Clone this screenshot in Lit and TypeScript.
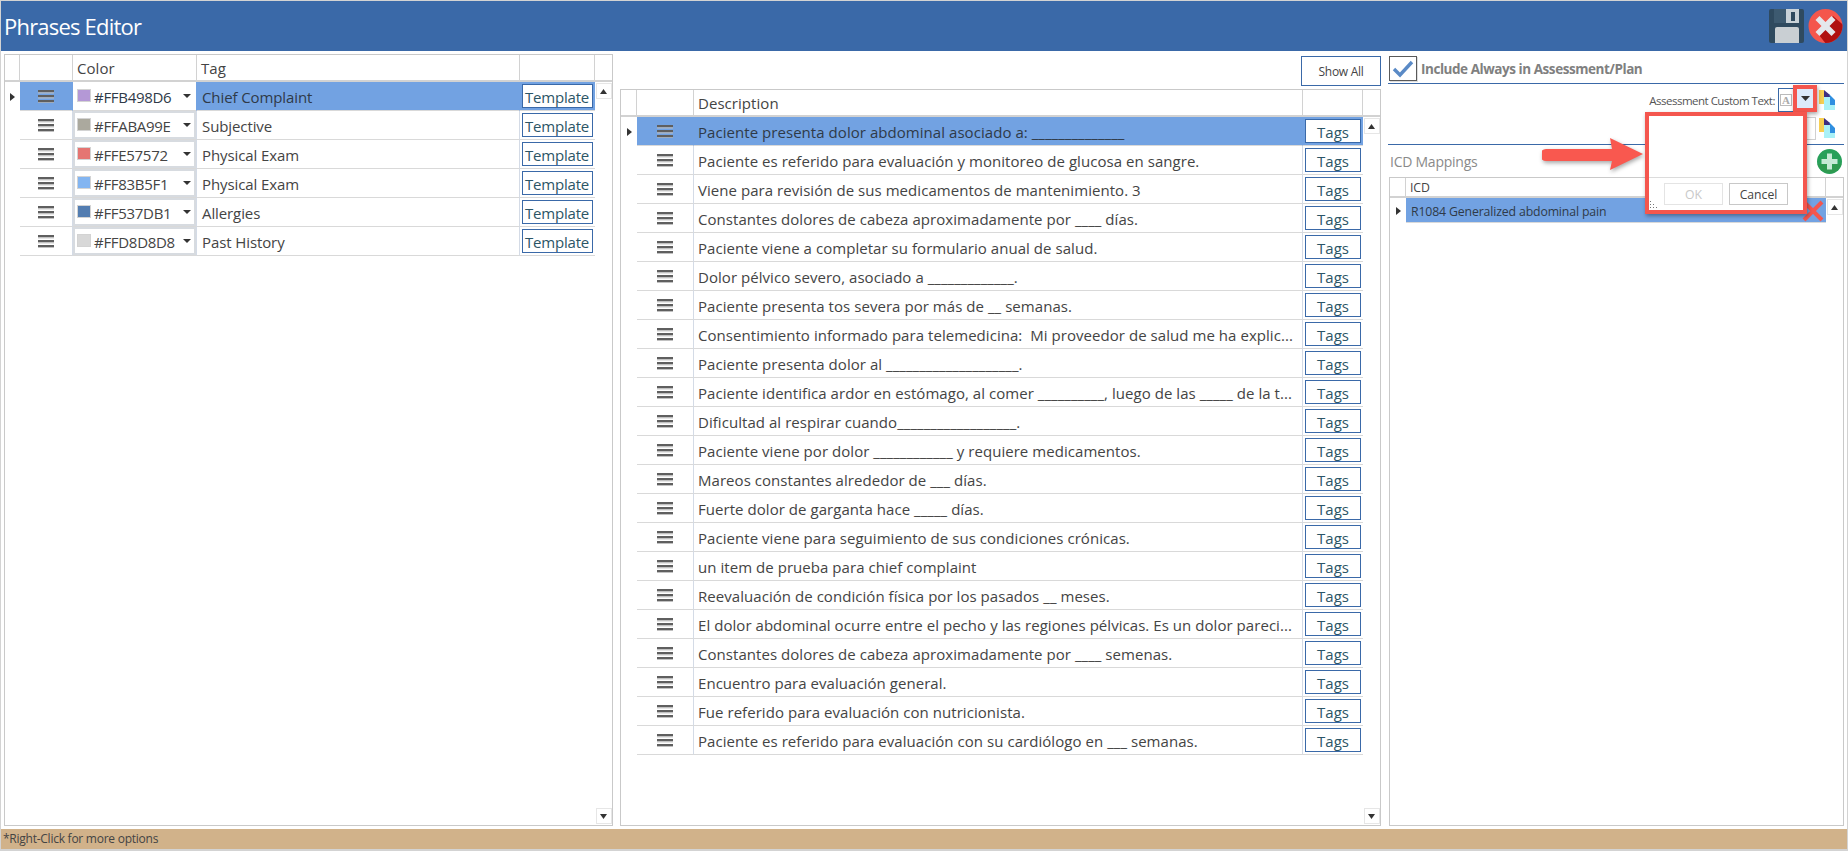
import { LitElement, html, css } from "lit";
import { customElement } from "lit/decorators.js";

const u = (n: number) => "_".repeat(n);

const TAGS = [
  ["#B498D6", "#FFB498D6", "Chief Complaint"],
  ["#ABA99E", "#FFABA99E", "Subjective"],
  ["#E57572", "#FFE57572", "Physical Exam"],
  ["#83B5F1", "#FF83B5F1", "Physical Exam"],
  ["#537DB1", "#FF537DB1", "Allergies"],
  ["#D8D8D8", "#FFD8D8D8", "Past History"],
];

const PHRASES = [
  `Paciente presenta dolor abdominal asociado a: ${u(14)}`,
  "Paciente es referido para evaluación y monitoreo de glucosa en sangre.",
  "Viene para revisión de sus medicamentos de mantenimiento. 3",
  `Constantes dolores de cabeza aproximadamente por ${u(4)} días.`,
  "Paciente viene a completar su formulario anual de salud.",
  `Dolor pélvico severo, asociado a ${u(13)}.`,
  `Paciente presenta tos severa por más de ${u(2)} semanas.`,
  "Consentimiento informado para telemedicina:  Mi proveedor de salud me ha explic...",
  `Paciente presenta dolor al ${u(20)}.`,
  `Paciente identifica ardor en estómago, al comer ${u(10)}, luego de las ${u(5)} de la t...`,
  `Dificultad al respirar cuando${u(18)}.`,
  `Paciente viene por dolor ${u(12)} y requiere medicamentos.`,
  `Mareos constantes alrededor de ${u(3)} días.`,
  `Fuerte dolor de garganta hace ${u(5)} días.`,
  "Paciente viene para seguimiento de sus condiciones crónicas.",
  "un item de prueba para chief complaint",
  `Reevaluación de condición física por los pasados ${u(2)} meses.`,
  "El dolor abdominal ocurre entre el pecho y las regiones pélvicas. Es un dolor pareci...",
  `Constantes dolores de cabeza aproximadamente por ${u(4)} semenas.`,
  "Encuentro para evaluación general.",
  "Fue referido para evaluación con nutricionista.",
  `Paciente es referido para evaluación con su cardiólogo en ${u(3)} semanas.`,
];

const burger = html`<svg class="burger" width="16" height="13" viewBox="0 0 16 13">
  <rect x="0" y="0" width="16" height="2.4" fill="#5f5f5f"></rect>
  <rect x="0" y="2.4" width="16" height="1" fill="#c4c4c4"></rect>
  <rect x="0" y="5" width="16" height="2.4" fill="#5f5f5f"></rect>
  <rect x="0" y="7.4" width="16" height="1" fill="#c4c4c4"></rect>
  <rect x="0" y="10" width="16" height="2.4" fill="#5f5f5f"></rect>
  <rect x="0" y="12.4" width="16" height="0.6" fill="#c4c4c4"></rect>
</svg>`;

const rowArrow = html`<svg width="5" height="8" viewBox="0 0 5 8"><path d="M0 0 L5 4 L0 8 Z" fill="#333"></path></svg>`;
const upBtn = html`<div class="sb"><svg width="7" height="5" viewBox="0 0 7 5"><path d="M0 5 L3.5 0 L7 5 Z" fill="#333"></path></svg></div>`;
const downBtn = html`<div class="sb"><svg width="7" height="5" viewBox="0 0 7 5"><path d="M0 0 L3.5 5 L7 0 Z" fill="#333"></path></svg></div>`;

const docIcon = html`<svg class="doc" width="16" height="20" viewBox="0 0 16 20">
  <rect x="0" y="0" width="5" height="14" fill="#f7cf52"></rect>
  <path d="M5 0 L11 5 L11 7 L5 7 Z" fill="#3f2f80"></path>
  <path d="M5 7 L11 7 L16 11 L16 20 L5 20 Z" fill="#a9f1f7"></path>
  <path d="M10 4 L16 10 L16 15 L11 15 L11 7 Z" fill="#2f8fe0"></path>
</svg>`;

const saveIcon = html`<svg width="35" height="34" viewBox="0 0 35 34">
  <path d="M2 0 H33 a2 2 0 0 1 2 2 V32 a2 2 0 0 1 -2 2 H2 a2 2 0 0 1 -2 -2 V2 a2 2 0 0 1 2 -2 Z" fill="#2f4a5f"></path>
  <rect x="5" y="0" width="25" height="14" fill="#3d5a70"></rect>
  <rect x="17" y="0" width="13" height="14" fill="#c9d2d8"></rect>
  <rect x="22" y="3" width="4" height="9" fill="#2f4a5f"></rect>
  <path d="M6 20 a2 2 0 0 1 2 -2 H28 a2 2 0 0 1 2 2 V34 H6 Z" fill="#c9cfd3"></path>
</svg>`;

const closeIcon = html`<svg width="35" height="34" viewBox="0 0 35 34">
  <defs><clipPath id="cc"><circle cx="17.5" cy="17" r="17"></circle></clipPath></defs>
  <circle cx="17.5" cy="17" r="17" fill="#f4564c"></circle>
  <path d="M25 7 L11 26 L22 40 L40 30 L40 20 Z" fill="#b01010" clip-path="url(#cc)"></path>
  <path d="M11.5 7 L17.5 13 L23.5 7 L27.5 11 L21.5 17 L27.5 23 L23.5 27 L17.5 21 L11.5 27 L7.5 23 L13.5 17 L7.5 11 Z" fill="#e4e7ec"></path>
</svg>`;

@customElement("app-root")
export class AppRoot extends LitElement {
  static styles = css`
    :host {
      display: flex;
      flex-direction: column;
      width: 1848px;
      height: 851px;
      box-sizing: border-box;
      padding: 1px 1px 2px 1px;
      background: #d3d3d3;
      font-family: "Open Sans", "Noto Sans", sans-serif;
      color: #444;
      overflow: hidden;
    }
    .title {
      flex: none;
      height: 50px;
      background: #3a69a8;
      display: flex;
      align-items: center;
      justify-content: space-between;
      padding: 0 4px 0 3px;
      color: #fff;
      font-size: 22px;
      letter-spacing: -0.8px;
    }
    .title-icons { display: flex; gap: 4px; }
    .main {
      flex: 1;
      min-height: 0;
      background: #fff;
      display: grid;
      grid-template-columns: 609px 761px 456px;
      column-gap: 7px;
      padding: 3px 0 3px 3px;
      position: relative;
    }
    .status {
      flex: none;
      height: 20px;
      background: #d1b28a;
      font-size: 12px;
      line-height: 20px;
      padding-left: 2px;
      letter-spacing: -0.25px;
      color: #444;
    }
    .panel { display: flex; flex-direction: column; min-height: 0; min-width: 0; }

    .grid {
      flex: 1;
      min-height: 0;
      border: 1px solid #c9c9c9;
      display: flex;
      flex-direction: column;
      font-size: 15px;
      letter-spacing: 0.05px;
    }
    .hdr {
      flex: none;
      display: flex;
      border-bottom: 2px solid #d2d2d2;
      box-sizing: border-box;
      height: 27px;
    }
    .hdr > div {
      border-right: 1px solid #d2d2d2;
      box-sizing: border-box;
      padding: 1px 0 0 4px;
      display: flex;
      align-items: center;
    }
    .hdr > div:last-child { border-right: 0; }
    .body { flex: 1; display: flex; min-height: 0; }
    .rows { flex: 1; min-width: 0; }
    .scroll {
      flex: none;
      display: flex;
      flex-direction: column;
      justify-content: space-between;
      align-items: center;
      padding: 1px 0;
    }
    .sb {
      width: 14px;
      height: 14px;
      border: 1px solid #e6e6e6;
      display: flex;
      align-items: center;
      justify-content: center;
      background: #fff;
    }
    .row { display: flex; height: 29px; box-sizing: border-box; }
    .ind { flex: none; display: flex; align-items: center; justify-content: center; box-sizing: border-box; }
    .cell {
      box-sizing: border-box;
      display: flex;
      align-items: center;
      border-right: 1px solid #d4dbe6;
      border-bottom: 1px solid #d9d9d9;
      min-width: 0;
    }
    .cell:last-child { border-right: 0; }
    .row.sel .cell { background: #72a2e2; border-right-color: #72a2e2; color: #2f3a48; }
    .burger-cell { justify-content: center; padding-top: 1px; }
    .txt { padding: 2px 0 0 4px; white-space: pre; }
    .left .txt { padding-left: 5px; letter-spacing: -0.1px; }

    .combo {
      background: #fff;
      box-sizing: border-box;
      width: 100%;
      height: 100%;
      border: 2px solid #d7dbe0;
      display: flex;
      align-items: center;
      padding: 1px 0 0 2px;
      letter-spacing: -0.3px;
    }
    .row.sel .combo { border-color: #fff; }
    .swatch { width: 14px; height: 13px; flex: none; border: 1px solid #d3d3d3; box-sizing: border-box; margin: -2px 3px 0 0; }
    .caret { margin: -1px 3px 0 auto; flex: none; }
    .btn {
      box-sizing: border-box;
      border: 1px solid #3a69a8;
      background: #fff;
      height: 24px;
      display: flex;
      align-items: center;
      justify-content: center;
      color: #2c5566;
      padding-top: 1px;
    }
    .action { justify-content: center; }
    .tmpl { width: 71px; margin-left: -1px; letter-spacing: -0.2px; }
    .tags { width: 56px; letter-spacing: 0; }

    .showbar { flex: none; height: 35px; display: flex; justify-content: flex-end; padding-top: 2px; box-sizing: border-box; }
    .show {
      box-sizing: border-box;
      width: 80px;
      height: 30px;
      border: 1px solid #3a69a8;
      display: flex;
      align-items: center;
      justify-content: center;
      font-size: 12px;
      letter-spacing: -0.3px;
      color: #444;
      background: #fff;
    }

    .right { position: relative; }
    .inc { flex: none; height: 29px; display: flex; align-items: center; gap: 4px; border-bottom: 1px solid #3a69a8; }
    .check {
      box-sizing: border-box;
      width: 28px;
      height: 25px;
      border: 1px solid #5a5a5a;
      box-shadow: 1px 1px 0 #ddd;
      display: flex;
      align-items: center;
      justify-content: center;
      margin-left: 1px;
    }
    .inc-label { font-weight: 700; font-size: 13.5px; letter-spacing: -0.45px; color: #808080; }
    .custom { flex: none; height: 60px; border-bottom: 1px solid #3a69a8; display: flex; flex-direction: column; }
    .c-row { display: flex; align-items: center; justify-content: flex-end; height: 30px; padding-right: 9px; box-sizing: border-box; }
    .c-row.one { padding-top: 2px; }
    .c-row.two { padding-bottom: 2px; }
    .c-label { font-size: 11.5px; letter-spacing: -0.5px; color: #555; margin-right: 3px; }
    .c-box { box-sizing: border-box; width: 38px; height: 24px; border: 1px solid #3a69a8; display: flex; align-items: center; padding-left: 1px; margin-right: 3px; }
    .c-a { box-sizing: border-box; width: 12px; height: 12px; border: 1px solid #bbb; font: 700 11px "Liberation Serif", serif; color: #aaa; display: flex; align-items: center; justify-content: center; }
    .c-box2 { box-sizing: border-box; width: 35px; height: 23px; border: 1px solid #d0d0d0; margin-right: 3px; }
    .doc { flex: none; }
    .icd-head { flex: none; height: 32px; display: flex; align-items: center; justify-content: space-between; padding: 0 2px; font-size: 14px; letter-spacing: -0.25px; color: #8a8a8a; }
    .right .grid { font-size: 12.3px; margin-left: 1px; letter-spacing: -0.15px; }
    .right .hdr { height: 20px; }
    .right .txt { padding-left: 5px; }

    .hl { position: absolute; box-sizing: border-box; border: 4px solid #f4564e; box-shadow: 1px 2px 4px rgba(0,0,0,.35); }
    .hl-btn { left: 405px; top: 31px; width: 24px; height: 27px; background: #dcebfb; display: flex; align-items: center; justify-content: center; }
    .popup { left: 257px; top: 58px; width: 162px; height: 102px; background: #fff; display: flex; flex-direction: column; }
    .p-top { height: 61px; flex: none; border-bottom: 1px solid #dcdcdc; }
    .p-btns { flex: 1; display: flex; justify-content: flex-end; gap: 6px; padding: 5px 15px 0 0; position: relative; }
    .p-btn { box-sizing: border-box; width: 59px; height: 22px; border: 1px solid #c8c8c8; font-size: 12.2px; color: #444; display: flex; align-items: center; justify-content: center; }
    .p-btn.off { border-color: #e4e4e4; color: #c8c8c8; }
    .grip { position: absolute; left: 1px; bottom: 1px; }
    .arrow { position: absolute; left: 154px; top: 84px; filter: drop-shadow(1px 2px 2px rgba(0,0,0,.35)); }
    .redx { position: absolute; left: 414px; top: 146px; }
    .plus { flex: none; }
  `;

  private tagRow(t: string[], i: number) {
    const sel = i === 0;
    return html`<div class="row ${sel ? "sel" : ""}">
      <div class="ind" style="width:15px">${sel ? rowArrow : ""}</div>
      <div class="cell burger-cell" style="width:53px">${burger}</div>
      <div class="cell" style="width:124px">
        <div class="combo">
          <span class="swatch" style="background:${t[0]}"></span><span>${t[1]}</span>
          <svg class="caret" width="8" height="4" viewBox="0 0 8 4"><path d="M0 0 H8 L4 4 Z" fill="#333"></path></svg>
        </div>
      </div>
      <div class="cell" style="width:323px"><span class="txt">${t[2]}</span></div>
      <div class="cell action" style="flex:1"><div class="btn tmpl">Template</div></div>
    </div>`;
  }

  private phraseRow(p: string, i: number) {
    const sel = i === 0;
    return html`<div class="row ${sel ? "sel" : ""}">
      <div class="ind" style="width:16px">${sel ? rowArrow : ""}</div>
      <div class="cell burger-cell" style="width:57px">${burger}</div>
      <div class="cell" style="width:609px"><span class="txt">${p}</span></div>
      <div class="cell action" style="flex:1"><div class="btn tags">Tags</div></div>
    </div>`;
  }

  render() {
    return html`
      <div class="title">
        <span>Phrases Editor</span>
        <div class="title-icons">${saveIcon}${closeIcon}</div>
      </div>
      <div class="main">
        <section class="panel left">
          <div class="grid">
            <div class="hdr">
              <div style="width:15px"></div><div style="width:53px"></div>
              <div style="width:124px">Color</div><div style="width:323px">Tag</div>
              <div style="width:75px"></div><div style="flex:1"></div>
            </div>
            <div class="body">
              <div class="rows">${TAGS.map((t, i) => this.tagRow(t, i))}</div>
              <div class="scroll" style="width:17px">${upBtn}${downBtn}</div>
            </div>
          </div>
        </section>
        <section class="panel mid">
          <div class="showbar"><div class="show">Show All</div></div>
          <div class="grid">
            <div class="hdr">
              <div style="width:16px"></div><div style="width:57px"></div>
              <div style="width:609px">Description</div><div style="width:60px"></div><div style="flex:1"></div>
            </div>
            <div class="body">
              <div class="rows">${PHRASES.map((p, i) => this.phraseRow(p, i))}</div>
              <div class="scroll" style="width:17px">${upBtn}${downBtn}</div>
            </div>
          </div>
        </section>
        <section class="panel right">
          <div class="inc">
            <div class="check">
              <svg width="22" height="18" viewBox="0 0 22 18"><path d="M2 9 L8 15 L20 2" fill="none" stroke="#5a8ac6" stroke-width="3.4"></path></svg>
            </div>
            <span class="inc-label">Include Always in Assessment/Plan</span>
          </div>
          <div class="custom">
            <div class="c-row one">
              <span class="c-label">Assessment Custom Text:</span>
              <div class="c-box"><span class="c-a">A</span></div>
              ${docIcon}
            </div>
            <div class="c-row two">
              <div class="c-box2"></div>
              ${docIcon}
            </div>
          </div>
          <div class="icd-head">
            <span>ICD Mappings</span>
            <svg class="plus" width="25" height="25" viewBox="0 0 25 25">
              <circle cx="12.5" cy="12.5" r="12.5" fill="#27a05a"></circle>
              <path d="M0.5 15 A12.5 12.5 0 0 0 24.5 15 Z" fill="#2f9a50"></path>
              <path d="M10 4.5 H15 V10 H20.5 V15 H15 V20.5 H10 V15 H4.5 V10 H10 Z" fill="#c6ead6"></path>
            </svg>
          </div>
          <div class="grid">
            <div class="hdr">
              <div style="width:16px"></div><div style="width:420px">ICD</div><div style="flex:1"></div>
            </div>
            <div class="body">
              <div class="rows">
                <div class="row sel" style="height:25px">
                  <div class="ind" style="width:16px">${rowArrow}</div>
                  <div class="cell" style="flex:1"><span class="txt">R1084 Generalized abdominal pain</span></div>
                </div>
              </div>
              <div class="scroll" style="width:17px">${upBtn}<span></span></div>
            </div>
          </div>

          <svg class="redx" width="22" height="22" viewBox="0 0 22 22"><path d="M2 2 L20 20 M20 2 L2 20" stroke="#f4564e" stroke-width="4"></path></svg>
          <svg class="arrow" width="102" height="34" viewBox="0 0 102 34">
            <path d="M4 11 H70 L68 0 L101 16 L68 32 L70 23 H4 a6 6 0 0 1 0 -12 Z" fill="#f9584f"></path>
          </svg>
          <div class="hl hl-btn">
            <svg width="9" height="5" viewBox="0 0 9 5"><path d="M0 0 H9 L4.5 5 Z" fill="#333"></path></svg>
          </div>
          <div class="hl popup">
            <div class="p-top"></div>
            <div class="p-btns">
              <div class="p-btn off">OK</div>
              <div class="p-btn">Cancel</div>
              <svg class="grip" width="8" height="8" viewBox="0 0 8 8"><g fill="#777"><rect x="0" y="0" width="1" height="1"></rect><rect x="0" y="3" width="1" height="1"></rect><rect x="3" y="3" width="1" height="1"></rect><rect x="0" y="6" width="1" height="1"></rect><rect x="3" y="6" width="1" height="1"></rect><rect x="6" y="6" width="1" height="1"></rect></g></svg>
            </div>
          </div>
        </section>
      </div>
      <div class="status">*Right-Click for more options</div>
    `;
  }
}
